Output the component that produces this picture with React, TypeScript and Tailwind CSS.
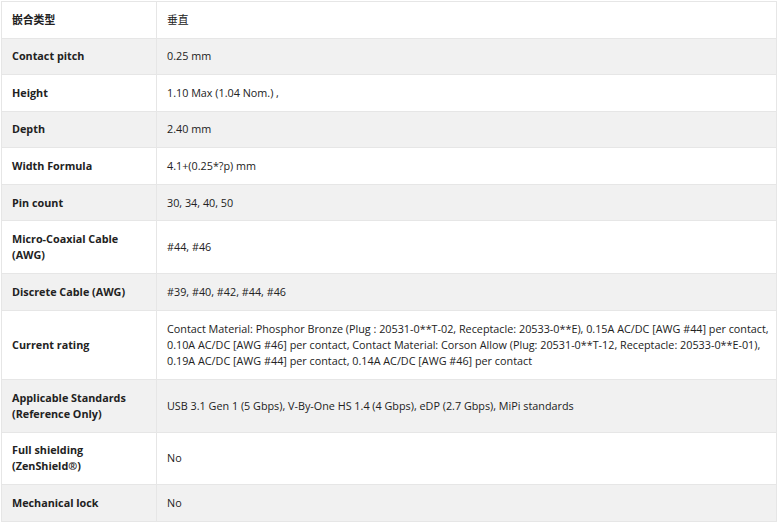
import React from 'react';

const rows: [string, React.ReactNode][] = [
  ['嵌合类型', '垂直'],
  ['Contact pitch', '0.25 mm'],
  ['Height', '1.10 Max (1.04 Nom.) ,'],
  ['Depth', '2.40 mm'],
  ['Width Formula', '4.1+(0.25*?p) mm'],
  ['Pin count', '30, 34, 40, 50'],
  ['Micro-Coaxial Cable (AWG)', '#44, #46'],
  ['Discrete Cable (AWG)', '#39, #40, #42, #44, #46'],
  [
    'Current rating',
    'Contact Material: Phosphor Bronze (Plug : 20531-0**T-02, Receptacle: 20533-0**E), 0.15A AC/DC [AWG #44] per contact, 0.10A AC/DC [AWG #46] per contact, Contact Material: Corson Allow (Plug: 20531-0**T-12, Receptacle: 20533-0**E-01), 0.19A AC/DC [AWG #44] per contact, 0.14A AC/DC [AWG #46] per contact',
  ],
  ['Applicable Standards (Reference Only)', 'USB 3.1 Gen 1 (5 Gbps), V-By-One HS 1.4 (4 Gbps), eDP (2.7 Gbps), MiPi standards'],
  ['Full shielding (ZenShield®)', 'No'],
  ['Mechanical lock', 'No'],
];

const App: React.FC = () => {
  return (
    <div className="w-[780px] h-[528px] bg-white pt-px pl-px font-['Open_Sans','Noto_Sans_CJK_SC',sans-serif] text-[10.8px] leading-[16.2px] text-[#222]">
      <table className="w-[776px] border-collapse table-fixed">
        <colgroup>
          <col className="w-[155px]" />
          <col />
        </colgroup>
        <tbody>
          {rows.map(([label, value], i) => (
            <tr key={i} className={i % 2 === 1 ? 'bg-[#f1f1f1]' : 'bg-white'}>
              <td className="border border-[#e6e6e6] pl-[10px] pr-[8px] py-[9.7px] font-bold align-middle">
                {label}
              </td>
              <td className="border border-[#e6e6e6] pl-[10px] pr-[4px] py-[9.7px] align-middle">{value}</td>
            </tr>
          ))}
        </tbody>
      </table>
    </div>
  );
};

export default App;
